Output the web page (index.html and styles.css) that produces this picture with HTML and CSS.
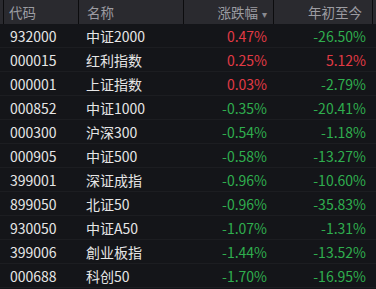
FILE: index.html
```html
<!DOCTYPE html>
<html lang="zh-CN">
<head>
    <meta charset="UTF-8">
    <title>指数涨跌</title>
    <link rel="stylesheet" href="styles.css">
</head>
<body>
    <div class="quote-table">
        <div class="row head">
            <div class="cell code">代码</div>
            <div class="cell name">名称</div>
            <div class="cell num">涨跌幅<span class="sort">&#9662;</span></div>
            <div class="cell num ytd">年初至今</div>
        </div>
        <div class="row">
            <div class="cell code">932000</div>
            <div class="cell name">中证2000</div>
            <div class="cell num up">0.47%</div>
            <div class="cell num ytd down">-26.50%</div>
        </div>
        <div class="row">
            <div class="cell code">000015</div>
            <div class="cell name">红利指数</div>
            <div class="cell num up">0.25%</div>
            <div class="cell num ytd up">5.12%</div>
        </div>
        <div class="row">
            <div class="cell code">000001</div>
            <div class="cell name">上证指数</div>
            <div class="cell num up">0.03%</div>
            <div class="cell num ytd down">-2.79%</div>
        </div>
        <div class="row">
            <div class="cell code">000852</div>
            <div class="cell name">中证1000</div>
            <div class="cell num down">-0.35%</div>
            <div class="cell num ytd down">-20.41%</div>
        </div>
        <div class="row">
            <div class="cell code">000300</div>
            <div class="cell name">沪深300</div>
            <div class="cell num down">-0.54%</div>
            <div class="cell num ytd down">-1.18%</div>
        </div>
        <div class="row">
            <div class="cell code">000905</div>
            <div class="cell name">中证500</div>
            <div class="cell num down">-0.58%</div>
            <div class="cell num ytd down">-13.27%</div>
        </div>
        <div class="row">
            <div class="cell code">399001</div>
            <div class="cell name">深证成指</div>
            <div class="cell num down">-0.96%</div>
            <div class="cell num ytd down">-10.60%</div>
        </div>
        <div class="row">
            <div class="cell code">899050</div>
            <div class="cell name">北证50</div>
            <div class="cell num down">-0.96%</div>
            <div class="cell num ytd down">-35.83%</div>
        </div>
        <div class="row">
            <div class="cell code">930050</div>
            <div class="cell name">中证A50</div>
            <div class="cell num down">-1.07%</div>
            <div class="cell num ytd down">-1.31%</div>
        </div>
        <div class="row">
            <div class="cell code">399006</div>
            <div class="cell name">創业板指</div>
            <div class="cell num down">-1.44%</div>
            <div class="cell num ytd down">-13.52%</div>
        </div>
        <div class="row">
            <div class="cell code">000688</div>
            <div class="cell name">科创50</div>
            <div class="cell num down">-1.70%</div>
            <div class="cell num ytd down">-16.95%</div>
        </div>
    </div>
</body>
</html>
```

FILE: styles.css
```css
/* 行情表 */
body {
    margin: 0;
    background: #141519;
    font-family: "Noto Sans CJK SC", "Noto Sans", sans-serif;
    font-size: 14px;
    color: #e6e6e6;
}
.quote-table {
    width: 376px;
}
.row {
    display: grid;
    grid-template-columns: 78px 105px 90px 103px;
    height: 24px;
    align-items: center;
    border-bottom: 1px solid #1c1d21;
    box-sizing: border-box;
}
.row.head {
    height: 24px;
    background: #2a2a2f;
    color: #9c9ca2;
    font-size: 13.5px;
    border-bottom: none;
}
.row.head .cell {
    height: 24px;
    line-height: 24px;
    border-left: 1px solid #0c0c0e;
    box-sizing: border-box;
}
.row.head .code {
    margin-left: 3px;
    padding-left: 5px;
}
.row.head .ytd {
    border-right: 1px solid #0c0c0e;
    margin-right: 3px;
}
.cell {
    white-space: nowrap;
}
.code {
    padding-left: 10px;
}
.name {
    padding-left: 8px;
}
.num {
    text-align: right;
    padding-right: 6px;
}
.ytd {
    padding-right: 10px;
}
.sort {
    font-size: 10px;
    margin-left: 4px;
    color: #8a8a90;
}
.up {
    color: #e23a45;
}
.down {
    color: #2fae4e;
}
```
